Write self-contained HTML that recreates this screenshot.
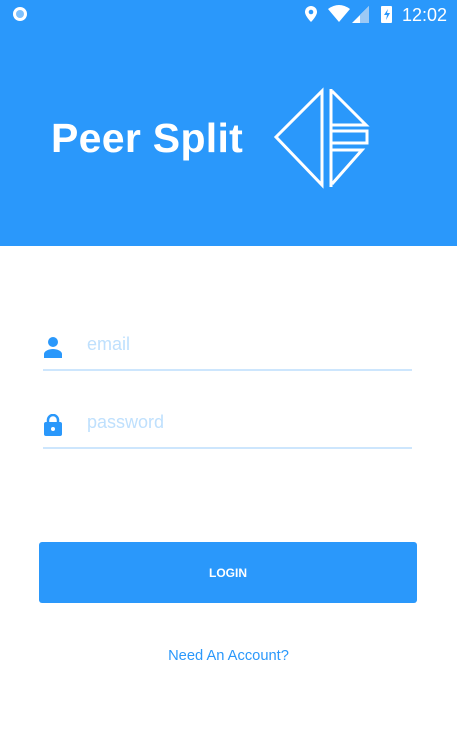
<!DOCTYPE html>
<html><head><meta charset="utf-8"><style>
*{margin:0;padding:0;box-sizing:border-box}
body{width:457px;height:755px;background:#fff;font-family:"Liberation Sans",sans-serif;position:relative;overflow:hidden}
.top{position:absolute;left:0;top:0;width:457px;height:246px;background:#2a98fb}
.title{position:absolute;left:51px;top:115px;color:#fff;font-weight:bold;font-size:41px;letter-spacing:0.3px}
.time{position:absolute;left:402px;top:5px;color:#fff;font-size:18px}
.ph{position:absolute;left:87px;color:#bfe0fd;font-size:18px}
.line{position:absolute;left:43px;width:369px;height:2px;background:#cde6fd}
.btn{position:absolute;left:39px;top:542px;width:378px;height:61px;background:#2a98fb;border-radius:3px;color:#fff;font-weight:bold;font-size:12px;text-align:center;line-height:63px}
.link{position:absolute;left:0;width:457px;top:648px;text-align:center;color:#2a98fb;font-size:14.7px}
</style></head><body>
<div class="top"></div>
<svg style="position:absolute;left:0;top:0" width="457" height="30">
<circle cx="20" cy="14" r="7" fill="#fff"/><circle cx="20" cy="14" r="4" fill="#2a98fb" opacity=".6"/>
<path d="M311 6a6 6 0 0 1 6 6c0 4-6 10-6 10s-6-6-6-10a6 6 0 0 1 6-6z" fill="#fff"/><circle cx="311" cy="12" r="2.3" fill="#2a98fb"/>
<path d="M328 9q11-8 22 0l-11 13z" fill="#fff"/>
<path d="M352 23l17-17v17z" fill="#fff"/><path d="M360 15l9-9v17h-9z" fill="#9cc9f5"/>
<rect x="381" y="6" width="11" height="17" rx="1" fill="#fff"/><path d="M388 9l-4 6h3l-1 5 4-7h-3z" fill="#2a98fb"/>
</svg>
<div class="time">12:02</div>
<div class="title">Peer Split</div>
<svg style="position:absolute;left:0;top:0" width="457" height="246" fill="none" stroke="#fff" stroke-width="3">
<path d="M276 137L322 91V185Z"/>
<path d="M331 89V187"/>
<path d="M332 91L366 125H332"/>
<path d="M332 131H367V143H332"/>
<path d="M332 150H362L332 184"/>
</svg>
<svg style="position:absolute;left:43px;top:336px" width="20" height="22"><circle cx="10" cy="6" r="5" fill="#2a98fb"/><path d="M1 22v-4c0-3 5-5 9-5s9 2 9 5v4z" fill="#2a98fb"/></svg>
<div class="ph" style="top:334px">email</div>
<div class="line" style="top:369px"></div>
<svg style="position:absolute;left:43px;top:414px" width="20" height="22"><path d="M5 9V6a5 5 0 0 1 10 0v3" stroke="#2a98fb" stroke-width="2.5" fill="none"/><rect x="1" y="8" width="18" height="14" rx="2" fill="#2a98fb"/><circle cx="10" cy="15" r="2" fill="#fff"/></svg>
<div class="ph" style="top:412px">password</div>
<div class="line" style="top:447px"></div>
<div class="btn">LOGIN</div>
<div class="link">Need An Account?</div>
</body></html>
